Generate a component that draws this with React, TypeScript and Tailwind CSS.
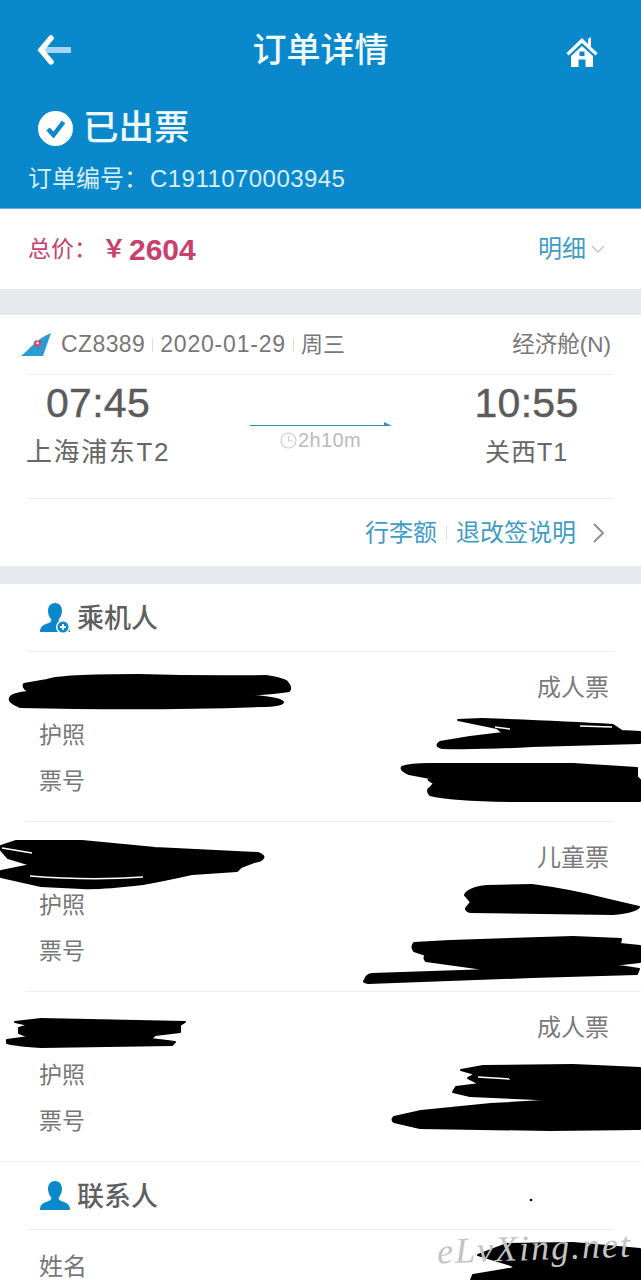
const font = { fontFamily: '"Liberation Sans","Noto Sans CJK SC",sans-serif' };

function Back() {
  return (
    <svg width="36" height="30" viewBox="0 0 36 30" className="block">
      <rect x="8" y="12" width="27" height="6" fill="#a9d4ef" />
      <path d="M15 3 L5 15 L15 27" fill="none" stroke="#fff" strokeWidth="5.5" strokeLinecap="round" strokeLinejoin="miter" />
    </svg>
  );
}

function Home() {
  return (
    <svg width="32" height="32" viewBox="0 0 32 32" className="block">
      <path d="M0.5 17 L16 2 L22 8 L22 3 L25 1 L25 11 L31.5 17 L29.5 19.5 L16 7 L2.5 19.5 Z" fill="#fff" />
      <path fillRule="evenodd" d="M16 10 L27 20 L27 31 L19.5 31 L19.5 23.5 L12.5 23.5 L12.5 31 L5 31 L5 20 Z M13.5 15.5 H18.5 V20 H13.5 Z" fill="#fff" />
    </svg>
  );
}

function Check() {
  return (
    <svg width="35" height="35" viewBox="0 0 35 35" className="block shrink-0">
      <circle cx="17.5" cy="17.5" r="17.5" fill="#fff" />
      <path d="M10 18 L15.5 24 L25.5 11" fill="none" stroke="#0a88cc" strokeWidth="4.5" />
    </svg>
  );
}

function Tail() {
  return (
    <svg width="30" height="24" viewBox="0 0 30 24" className="block shrink-0">
      <path d="M0 23 C8 17 15 6 30 0 L22 23 Z" fill="#2b9bd6" />
      <path d="M13 9 c1 -2 3 -2 4 -1 c2 -1 4 0 3 2 c1 2 -1 3 -2 3 l-1 4 l-1 -4 c-2 0 -4 -2 -3 -4z" fill="#d8456a" />
      <circle cx="16.5" cy="10" r="1.2" fill="#fff" />
    </svg>
  );
}

function Person({ plus }: { plus?: boolean }) {
  return (
    <svg width="31" height="32" viewBox="0 0 31 32" className="block shrink-0">
      <path d="M15 1 C20 1 22 5 22 9 C22 13 20 16 18.5 18 C18.5 20 21 21 24 22 C27 23 30 25 30 30 L0 30 C0 25 3 23 6 22 C9 21 11.5 20 11.5 18 C10 16 8 13 8 9 C8 5 10 1 15 1 Z" fill="#0a88cc" />
      {plus && <circle cx="23" cy="25" r="7" fill="#fff" />}
      {plus && <circle cx="23" cy="25" r="5.5" fill="#0a88cc" />}
      {plus && <path d="M20 25 H26 M23 22 V28" stroke="#fff" strokeWidth="1.8" />}
    </svg>
  );
}

function Passenger({ type, divider }: { type: string; divider: string }) {
  return (
    <section className="h-[170px] flex flex-col">
      <div className="h-[52px] flex items-end justify-end pr-[32px] text-[24px] leading-[32px] text-[#7a7a7a]">{type}</div>
      <div className="pl-[39px] text-[23px] leading-[32px] text-[#777] mt-[15px]">护照</div>
      <div className="pl-[39px] text-[23px] leading-[32px] text-[#777] mt-[14px]">票号</div>
      <div className={`mt-auto h-px bg-[#eeeeee] ${divider}`} />
    </section>
  );
}

export default function App() {
  return (
    <div style={font} className="relative w-[641px] h-[1280px] overflow-hidden bg-white">
      <header className="h-[209px] bg-[#0a88cc] border-b border-[#5fb2e2] text-white flex flex-col">
        <div className="h-[100px] relative flex items-center justify-between pl-[36px] pr-[43px]">
          <Back />
          <h1 className="absolute left-0 right-0 text-center text-[34px] leading-[44px] font-medium text-[#f2fafe]">订单详情</h1>
          <div className="translate-y-[2px]"><Home /></div>
        </div>
        <div className="flex items-center pl-[38px] gap-[10px] mt-[7px] h-[42px]">
          <Check />
          <span className="text-[35.5px] leading-[42px] font-medium text-[#eef9ff]">已出票</span>
        </div>
        <div className="pl-[28px] mt-[14px] text-[24px] leading-[32px] text-[#d8eefa] whitespace-nowrap">订单编号：<span className="tracking-[0.45px] ml-[2px]">C1911070003945</span></div>
      </header>

      <div className="h-[80px] flex items-center justify-between pl-[28px] pr-[36px]">
        <div className="flex items-center text-[#c8406f]">
          <span className="text-[23px]">总价：</span>
          <span className="text-[24px] font-bold ml-[5px]">￥</span>
          <span className="text-[30px] font-bold ml-[3px]">2604</span>
        </div>
        <div className="flex items-center gap-[5px] text-[#3f9cc6] text-[24px]">
          明细
          <svg width="14" height="10" viewBox="0 0 14 10" className="block"><path d="M1 2 L7 8 L13 2" fill="none" stroke="#c4c4c4" strokeWidth="1.4" /></svg>
        </div>
      </div>

      <div className="h-[26px] bg-[#e6eaee]" />

      <section className="h-[251px] flex flex-col">
        <div className="h-[59px] flex items-center justify-between pl-[21px] pr-[30px] text-[23px] text-[#777]">
          <div className="flex items-center tracking-[0.4px]">
            <Tail />
            <span className="ml-[10px]">CZ8389</span>
            <span className="w-px h-[14px] bg-[#dddddd] mx-[7px]" />
            <span className="tracking-[0.8px]">2020-01-29</span>
            <span className="w-px h-[14px] bg-[#dddddd] mx-[7px]" />
            <span className="tracking-normal text-[22px]">周三</span>
          </div>
          <span className="text-[22.5px]">经济舱(N)</span>
        </div>
        <div className="h-[125px] mx-[27px] border-y border-[#eeeeee] flex justify-between">
          <div className="w-[144px] text-center ml-[-1px]">
            <div className="text-[41px] leading-[44px] mt-[6px] font-normal tracking-[0.3px] text-[#5b5b5b] [-webkit-text-stroke:0.4px_#5b5b5b]">07:45</div>
            <div className="text-[26px] leading-[34px] mt-[10px] text-[#666] whitespace-nowrap tracking-[1.6px]">上海浦东T2</div>
          </div>
          <div className="w-[142px] mt-[46px] ml-[-2px] flex flex-col items-center">
            <svg width="142" height="6" viewBox="0 0 142 6" className="block"><path d="M0 5 H142 L134 1 V4 H0 Z" fill="#2f8ebd" /></svg>
            <div className="flex items-center mt-[1px] ml-[-1px] text-[#bbbbbb] text-[20px] leading-[24px]">
              <svg width="17" height="17" viewBox="0 0 17 17" className="block mr-[1px]"><circle cx="8.5" cy="8.5" r="7.5" fill="none" stroke="#cccccc" strokeWidth="1.2" /><path d="M8.5 4 V9 H12.5" fill="none" stroke="#cccccc" strokeWidth="1.2" /></svg>
              <span className="tracking-[0.4px]">2h10m</span>
            </div>
          </div>
          <div className="w-[105px] text-center mr-[35px]">
            <div className="text-[41px] leading-[44px] mt-[6px] tracking-[0.3px] text-[#5b5b5b] [-webkit-text-stroke:0.4px_#5b5b5b]">10:55</div>
            <div className="text-[25px] leading-[34px] mt-[10px] text-[#666] whitespace-nowrap tracking-[1px]">关西T1</div>
          </div>
        </div>
        <div className="flex-1 flex items-center justify-end pr-[36px] text-[24px] text-[#3f9cc6]">
          <span>行李额</span>
          <span className="w-px h-[14px] bg-[#dddddd] mx-[9px]" />
          <span>退改签说明</span>
          <svg width="13" height="22" viewBox="0 0 13 22" className="block ml-[16px]"><path d="M2 2 L11 11 L2 20" fill="none" stroke="#8f8f8f" strokeWidth="2" /></svg>
        </div>
      </section>

      <div className="h-[18px] bg-[#e6eaee]" />

      <div className="mx-[27px] h-[68px] border-b border-[#eeeeee] flex items-center pl-[13px] gap-[6px]">
        <Person plus />
        <span className="text-[27px] leading-[36px] font-medium text-[#5f5f5f] translate-y-[1px]">乘机人</span>
      </div>
      <Passenger type="成人票" divider="ml-[25px] mr-[27px]" />
      <Passenger type="儿童票" divider="ml-[25px]" />
      <Passenger type="成人票" divider="" />

      <div className="mx-[27px] h-[68px] border-b border-[#eeeeee] flex items-center pl-[13px] gap-[6px]">
        <Person />
        <span className="text-[27px] leading-[36px] font-medium text-[#5f5f5f] translate-y-[1px]">联系人</span>
      </div>
      <div className="pl-[39px] pt-[21px] text-[24px] leading-[32px] text-[#777]">姓名</div>

      <svg width="641" height="1280" viewBox="0 0 641 1280" className="absolute inset-0 pointer-events-none">
        <g fill="#000" stroke="#000" strokeWidth="2" strokeLinejoin="round">
          <path d="M47 680 Q60 675 139 675 Q200 677 266 676 Q285 679 287 682 Q292 688 289 691 Q270 694 237 695 Q280 697 283 702 Q283 706 260 706 Q150 710 20 707 Q8 702 10 698 Q12 693 30 692 Q22 688 24 684 Z" />
          <path d="M458 720 L482 719 Q560 722 613 725 L622 731 L640 732 V743 L532 746 Q480 749 442 748 Q434 746 440 742 L470 737 L503 733 L497 728 Z" />
          <path d="M402 767 Q410 764 429 764 H573 L637 768 V777 L640 780 V801 L511 801 Q450 800 430 795 Q426 790 430 788 L434 783 Q426 780 430 778 L409 774 Q400 770 402 767 Z" />
          <path d="M16 841 H82 L155 848 L258 853 Q265 856 263 858 Q262 861 254 862 L241 867 L237 871 L192 874 Q165 880 143 884 Q100 889 82 888 L41 886 L1 877 V871 L31 865 L8 858 L1 850 V846 Z" />
          <path d="M465 895 Q468 888 487 886 L532 885 Q570 890 605 899 L639 907 Q636 912 613 914 L470 912 Q464 910 467 907 L471 902 Z" />
          <path d="M414 943 L450 941 L573 937 L621 939 L620 944 L640 946 V962 L613 965 L639 969 L637 974 L532 977 L368 983 Q362 982 365 980 Q366 975 372 974 L491 970 L426 961 Q423 958 426 955 L414 951 Q411 947 414 943 Z" />
          <path d="M15 1022 L41 1019 L185 1022 L180 1025 L180 1032 L155 1035 L151 1039 L175 1042 L172 1045 L41 1047 Q10 1045 7 1043 V1040 L29 1037 L19 1033 V1028 L29 1025 Z" />
          <path d="M461 1070 L483 1066 L573 1065 L640 1068 V1129 L550 1130 L420 1128 L394 1122 Q391 1120 394 1117 L421 1111 L491 1104 L560 1100 L470 1096 L453 1092 L456 1087 L480 1084 L468 1078 L475 1074 Z" />
          <path d="M507 1244 L573 1243 L640 1249 V1280 H471 L473 1275 L515 1268 L511 1265 L478 1255 Z" />
        </g>
        <circle cx="531" cy="1200" r="1.3" fill="#000" />
        <g fill="none" stroke="#fff" strokeWidth="1.4">
          <path d="M2 848 Q20 851 32 853" />
          <path d="M30 876 Q90 881 143 877" />
          <path d="M495 727 L510 729 M580 726 L612 727" />
          <path d="M478 1077 L510 1079" />
        </g>
      </svg>
      <div style={{ fontFamily: '"Liberation Serif",serif' }} className="absolute left-[437px] top-[1226px] text-[36px] leading-[44px] italic text-[#c4c4c4] tracking-[2px] -rotate-[2deg] whitespace-nowrap">eLvXing.net</div>
    </div>
  );
}
